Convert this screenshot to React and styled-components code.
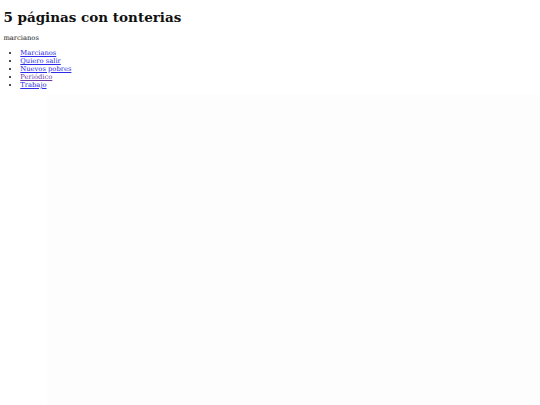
import React from "react";
import styled, { createGlobalStyle } from "styled-components";

const Global = createGlobalStyle`
  html, body { margin: 0; padding: 0; background: #ffffff; }
  body {
    font-family: "DejaVu Serif", serif;
    font-size: 6.75px;
    color: #111;
  }
`;

const Page = styled.div`
  display: flex;
  flex-direction: column;
  min-height: 405px;
  padding: 0 3.4px;
  box-sizing: border-box;
`;

const Title = styled.h1`
  font-size: 13.5px;
  font-weight: bold;
  margin: 9px 0;
`;

const Lead = styled.p`
  margin: 0 0 6.75px;
`;

const Links = styled.ul`
  margin: 0;
  padding-left: 16.9px;
  list-style: disc;
`;

const Item = styled.li``;

const Link = styled.a`
  color: ${(p) => (p.$visited ? "#6a3aa8" : "#2a2ae8")};
  text-decoration: underline;
`;

const Frame = styled.div`
  flex: 1;
  margin: 6px -3.4px 0 44px;
  background: #fdfdfd;
`;

const pages = [
  { name: "Marcianos" },
  { name: "Quiero salir" },
  { name: "Nuevos pobres" },
  { name: "Periódico", visited: true },
  { name: "Trabajo" },
];

export default function App() {
  return (
    <>
      <Global />
      <Page>
        <Title>5 páginas con tonterias</Title>
        <Lead>marcianos</Lead>
        <Links>
          {pages.map((p) => (
            <Item key={p.name}>
              <Link href="#" $visited={p.visited}>
                {p.name}
              </Link>
            </Item>
          ))}
        </Links>
        <Frame />
      </Page>
    </>
  );
}
